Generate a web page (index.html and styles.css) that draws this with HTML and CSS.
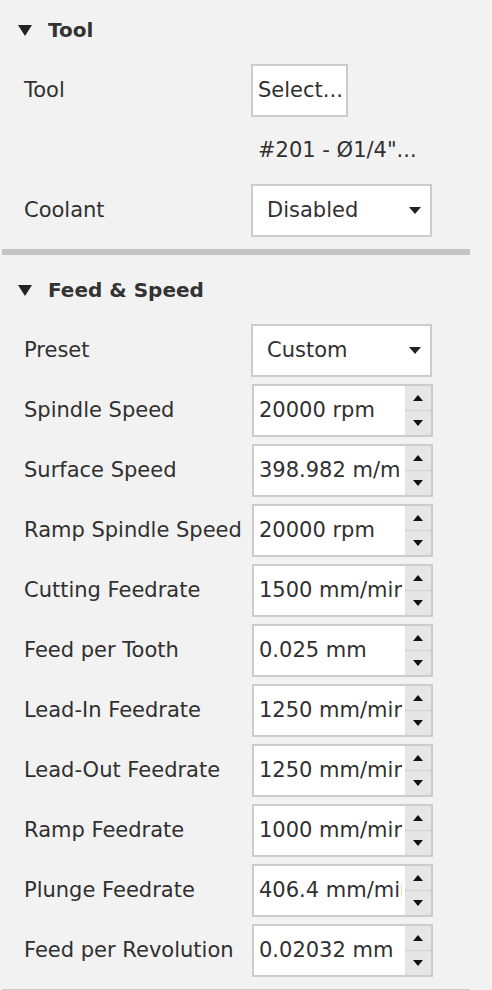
FILE: index.html
```html
<!DOCTYPE html>
<html>
<head>
<meta charset="utf-8">
<link rel="stylesheet" href="styles.css">
</head>
<body>
<div class="panel">
  <div class="section">
    <div class="header"><span class="tri"></span><span class="htext">Tool</span></div>
    <div class="row"><div class="label">Tool</div><div class="ctl"><div class="button">Select...</div></div></div>
    <div class="row"><div class="label"></div><div class="ctl"><div class="info">#201 - Ø1/4"...</div></div></div>
    <div class="row"><div class="label">Coolant</div><div class="ctl"><div class="select"><span class="sval">Disabled</span><span class="sarrow"></span></div></div></div>
  </div>
  <div class="sep"></div>
  <div class="section">
    <div class="header"><span class="tri"></span><span class="htext">Feed &amp; Speed</span></div>
    <div class="row"><div class="label">Preset</div><div class="ctl"><div class="select"><span class="sval">Custom</span><span class="sarrow"></span></div></div></div>
    <div class="row"><div class="label">Spindle Speed</div><div class="ctl"><div class="spin"><div class="sinput"><span class="stext">20000 rpm</span></div><div class="sbtns"><div class="sbtn"><span class="up"></span></div><div class="sbtn"><span class="down"></span></div></div></div></div></div>
    <div class="row"><div class="label">Surface Speed</div><div class="ctl"><div class="spin"><div class="sinput"><span class="stext">398.982 m/min</span></div><div class="sbtns"><div class="sbtn"><span class="up"></span></div><div class="sbtn"><span class="down"></span></div></div></div></div></div>
    <div class="row"><div class="label">Ramp Spindle Speed</div><div class="ctl"><div class="spin"><div class="sinput"><span class="stext">20000 rpm</span></div><div class="sbtns"><div class="sbtn"><span class="up"></span></div><div class="sbtn"><span class="down"></span></div></div></div></div></div>
    <div class="row"><div class="label">Cutting Feedrate</div><div class="ctl"><div class="spin"><div class="sinput"><span class="stext">1500 mm/min</span></div><div class="sbtns"><div class="sbtn"><span class="up"></span></div><div class="sbtn"><span class="down"></span></div></div></div></div></div>
    <div class="row"><div class="label">Feed per Tooth</div><div class="ctl"><div class="spin"><div class="sinput"><span class="stext">0.025 mm</span></div><div class="sbtns"><div class="sbtn"><span class="up"></span></div><div class="sbtn"><span class="down"></span></div></div></div></div></div>
    <div class="row"><div class="label">Lead-In Feedrate</div><div class="ctl"><div class="spin"><div class="sinput"><span class="stext">1250 mm/min</span></div><div class="sbtns"><div class="sbtn"><span class="up"></span></div><div class="sbtn"><span class="down"></span></div></div></div></div></div>
    <div class="row"><div class="label">Lead-Out Feedrate</div><div class="ctl"><div class="spin"><div class="sinput"><span class="stext">1250 mm/min</span></div><div class="sbtns"><div class="sbtn"><span class="up"></span></div><div class="sbtn"><span class="down"></span></div></div></div></div></div>
    <div class="row"><div class="label">Ramp Feedrate</div><div class="ctl"><div class="spin"><div class="sinput"><span class="stext">1000 mm/min</span></div><div class="sbtns"><div class="sbtn"><span class="up"></span></div><div class="sbtn"><span class="down"></span></div></div></div></div></div>
    <div class="row"><div class="label">Plunge Feedrate</div><div class="ctl"><div class="spin"><div class="sinput"><span class="stext">406.4 mm/min</span></div><div class="sbtns"><div class="sbtn"><span class="up"></span></div><div class="sbtn"><span class="down"></span></div></div></div></div></div>
    <div class="row"><div class="label">Feed per Revolution</div><div class="ctl"><div class="spin"><div class="sinput"><span class="stext">0.02032 mm</span></div><div class="sbtns"><div class="sbtn"><span class="up"></span></div><div class="sbtn"><span class="down"></span></div></div></div></div></div>
  </div>
  <div class="bottomline"></div>
</div>
</body>
</html>
```

FILE: styles.css
```css
html, body {
  margin: 0;
  padding: 0;
  background: #f2f2f2;
}
body {
  font-family: "DejaVu Sans", "Liberation Sans", sans-serif;
  font-size: 21px;
  color: #303030;
  width: 492px;
  height: 990px;
  overflow: hidden;
}
.panel {
  display: flex;
  flex-direction: column;
}
.section {
  display: flex;
  flex-direction: column;
}
.header {
  height: 60px;
  display: flex;
  align-items: center;
  padding-left: 18px;
}
.tri {
  width: 0;
  height: 0;
  border-left: 7px solid transparent;
  border-right: 7px solid transparent;
  border-top: 11px solid #222222;
  margin-right: 16px;
}
.htext {
  font-weight: bold;
  font-size: 20px;
  color: #333333;
}
.row {
  height: 60px;
  display: flex;
  align-items: center;
}
.label {
  width: 227px;
  padding-left: 24px;
  white-space: nowrap;
}
.ctl {
  display: flex;
  align-items: center;
}
.button {
  box-sizing: border-box;
  width: 97px;
  height: 53px;
  background: #ffffff;
  border: 2px solid #cccccc;
  display: flex;
  align-items: center;
  padding-left: 5px;
  white-space: nowrap;
  overflow: hidden;
}
.info {
  padding-left: 7px;
}
.select {
  box-sizing: border-box;
  width: 181px;
  height: 53px;
  background: #ffffff;
  border: 2px solid #cccccc;
  display: flex;
  align-items: center;
  justify-content: space-between;
  padding-left: 14px;
  padding-right: 9px;
}
.sarrow {
  width: 0;
  height: 0;
  border-left: 6px solid transparent;
  border-right: 6px solid transparent;
  border-top: 7px solid #222222;
}
.spin {
  box-sizing: border-box;
  width: 181px;
  height: 53px;
  margin-left: 1px;
  background: #e8e8e8;
  border: 2px solid #cccccc;
  display: flex;
}
.sinput {
  width: 151px;
  background: #ffffff;
  display: flex;
  align-items: center;
  padding-left: 5px;
  padding-right: 3px;
  box-sizing: border-box;
}
.stext {
  flex: 1;
  white-space: nowrap;
  overflow: hidden;
}
.sbtns {
  flex: 1;
  display: flex;
  flex-direction: column;
  gap: 1px;
  background: #d6d6d6;
}
.sbtn {
  flex: 1;
  background: #e6e6e6;
  display: flex;
  align-items: center;
  justify-content: center;
  border-radius: 3px;
}
.up {
  width: 0;
  height: 0;
  border-left: 5px solid transparent;
  border-right: 5px solid transparent;
  border-bottom: 6px solid #111111;
}
.down {
  width: 0;
  height: 0;
  border-left: 5px solid transparent;
  border-right: 5px solid transparent;
  border-top: 6px solid #111111;
}
.sep {
  height: 6px;
  width: 468px;
  margin-left: 2px;
  margin-top: 9px;
  margin-bottom: 5px;
  background: #c4c4c4;
}
.bottomline {
  height: 1px;
  width: 468px;
  margin-left: 2px;
  margin-top: 9px;
  background: #cccccc;
}
```
